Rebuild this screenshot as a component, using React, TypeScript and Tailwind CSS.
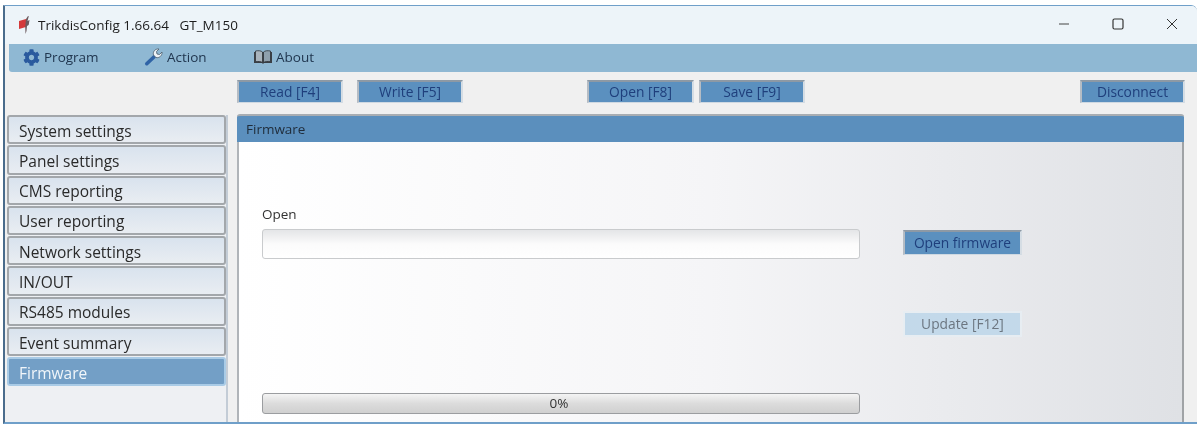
import { FaCog } from 'react-icons/fa';

const FONT = "font-['Open_Sans','Noto_Sans',sans-serif]";

const NAV = [
  'System settings',
  'Panel settings',
  'CMS reporting',
  'User reporting',
  'Network settings',
  'IN/OUT',
  'RS485 modules',
  'Event summary',
];

function ToolButton({ label, className = '' }: { label: string; className?: string }) {
  return (
    <div
      className={`h-[23px] flex items-center justify-center bg-[#5b90bf] text-[#1f3f7c] text-[13.800px] border-t-2 border-l-2 border-t-[#8d99a5] border-l-[#b5bcc4] border-r-2 border-r-[#d5dde4] border-b border-b-[#cfd9e2] ${className}`}
    >
      {label}
    </div>
  );
}

function WrenchIcon() {
  return (
    <svg width="20" height="20" viewBox="0 0 20 20" className="shrink-0 mr-[3px]">
      <path d="M1.500 15.500L10 7.500l2.500 2.500-8.500 8a1.700 1.700 0 0 1-2.500-2.500z" fill="#2f63a6" />
      <path d="M9.500 8c-1-3 1.500-6.500 5.500-6L12.500 4.500l.5 2.500 2.500.5L18 5c.5 3.500-3 6.500-6 5.500z" fill="#eef3f7" stroke="#4a5a6a" strokeWidth="0.8" />
    </svg>
  );
}

function BookIcon() {
  return (
    <svg width="20" height="16" viewBox="0 0 20 16" className="shrink-0">
      <path d="M1 3h18v11H11l-1 1-1-1H1z" fill="#3a3f45" />
      <path d="M2.500 2c3-.6 5.500-.3 7 1v10.500c-1.500-1-4-1.300-7-.8z" fill="#a9b4bd" stroke="#2f343a" strokeWidth="0.8" />
      <path d="M17.500 2c-3-.6-5.500-.3-7 1v10.500c1.500-1 4-1.300 7-.8z" fill="#8fa0ad" stroke="#2f343a" strokeWidth="0.8" />
    </svg>
  );
}

function AppIcon() {
  return (
    <svg width="14" height="20" viewBox="0 0 14 20" className="shrink-0">
      <path d="M1 6l7-2v8l-7 2z" fill="#d4393a" />
      <path d="M8 4l2-3 .8.3L9.500 6l2-1-.8 5-1.700 1-.5 5-1 3-.3-7z" fill="#6b5a5e" />
    </svg>
  );
}

export default function App() {
  return (
    <div className={`${FONT} w-[1200px] h-[428px] bg-white overflow-hidden pt-[5px] pl-[3px] pr-[3px] blur-[0.4px]`}>
      <div className="h-[419px] flex flex-col bg-[#f0f0f0] border-t border-t-[#6f9fc9] border-l-2 border-l-[#4a6c8c] border-b-2 border-b-[#6f9fc9] rounded-tr-[6px] overflow-hidden">
        {/* title bar */}
        <div className="h-[38px] shrink-0 flex items-center bg-[#edf4f9] pl-[13px] text-[#1c1c1c] text-[13.500px]">
          <AppIcon />
          <span className="ml-[6px] whitespace-pre">TrikdisConfig 1.66.64   GT_M150</span>
          <div className="ml-auto flex items-center pb-[2px]">
            <svg width="12" height="12" viewBox="0 0 12 12" className="mr-[42px]">
              <path d="M1 6h10" stroke="#444" strokeWidth="1" />
            </svg>
            <svg width="12" height="12" viewBox="0 0 12 12" className="mr-[42px]">
              <rect x="1" y="1" width="10" height="10" rx="1.500" fill="none" stroke="#333" strokeWidth="1.200" />
            </svg>
            <svg width="12" height="12" viewBox="0 0 12 12" className="mr-[19px]">
              <path d="M1 1l10 10M11 1L1 11" stroke="#333" strokeWidth="1" />
            </svg>
          </div>
        </div>

        {/* menu */}
        <div className="h-[28px] shrink-0 ml-[4px] pb-[2px] flex items-center bg-[#8fb8d3] rounded-bl-[3px] text-[#20364f] text-[13.500px] pl-[14px]">
          <div className="flex items-center w-[121px]">
            <FaCog className="text-[#2a5a9e] text-[17px] mr-[4px]" />
            Program
          </div>
          <div className="flex items-center w-[109px]">
            <WrenchIcon />
            Action
          </div>
          <div className="flex items-center gap-[3px]">
            <BookIcon />
            About
          </div>
        </div>

        <div className="flex flex-1 min-h-0">
          {/* sidebar */}
          <div className="w-[221px] shrink-0 mt-[43px] ml-[2px] border-r-2 border-r-[#c3ccd6] flex flex-col gap-px bg-[#eef0f3]">
            {NAV.map((item) => (
              <div
                key={item}
                className="h-[29.300px] shrink-0 flex items-center pl-[10px] pt-[3px] bg-gradient-to-b from-[#d9e3ee] to-[#e9edf2] border-2 border-[#a3a7ab] rounded-[3px] text-[#2a2a2a] text-[15.500px]"
              >
                {item}
              </div>
            ))}
            <div className="h-[29px] shrink-0 flex items-center pl-[10px] pt-[3px] bg-[#739fc6] border-2 border-[#a9cbe6] rounded-[3px] text-[#f1f6fa] text-[15.500px]">
              Firmware
            </div>
          </div>

          {/* content */}
          <div className="flex-1 min-w-0 pl-[9px] flex flex-col">
            <div className="h-[42px] shrink-0 flex pt-[8px] pr-[12px]">
              <ToolButton label="Read [F4]" className="w-[106px]" />
              <ToolButton label="Write [F5]" className="w-[106px] ml-[14px]" />
              <ToolButton label="Open [F8]" className="w-[107px] ml-[124px]" />
              <ToolButton label="Save [F9]" className="w-[106px] ml-[5px]" />
              <ToolButton label="Disconnect" className="w-[105px] ml-auto" />
            </div>

            <div className="flex-1 min-h-0 flex flex-col mr-[13px]">
              <div className="h-[28px] shrink-0 flex items-center pl-[9px] pt-[1px] bg-[#5b8fbd] rounded-t-[3px] border-t-2 border-t-[#a8adb2] text-[#1f2c3a] text-[13.500px]">
                Firmware
              </div>
              <div className="flex-1 min-h-0 flex border-l-2 border-l-[#b0b4b8] border-r-2 border-r-[#a0a3a6] bg-gradient-to-r from-white via-[#f5f5f7] to-[#dfe1e5] pl-[23px]">
                <div className="w-[598px] shrink-0 flex flex-col pt-[62px]">
                  <div className="text-[13.500px] text-[#333] leading-[20px]">Open</div>
                  <div className="h-[30px] mt-[5px] rounded-[3px] border border-[#c9cbcd] bg-gradient-to-b from-[#e4e5e7] via-[#fbfbfb] to-white" />
                  <div className="h-[21px] mt-[134px] pr-[4px] flex items-center justify-center rounded-[3px] border border-[#9b9da0] bg-gradient-to-b from-[#f4f4f4] via-[#dcdcdc] to-[#d0d0d0] text-[13.500px] text-[#333]">
                    0%
                  </div>
                </div>
                <div className="ml-[43px] w-[119px] flex flex-col pt-[88px]">
                  <ToolButton label="Open firmware" className="h-[25px] w-full" />
                  <div className="h-[26px] mt-[56px] flex items-center justify-center bg-[#c3d9ea] border-2 border-[#e7edf2] text-[#6c7680] text-[13.800px]">
                    Update [F12]
                  </div>
                </div>
              </div>
            </div>
          </div>
        </div>
      </div>
    </div>
  );
}
